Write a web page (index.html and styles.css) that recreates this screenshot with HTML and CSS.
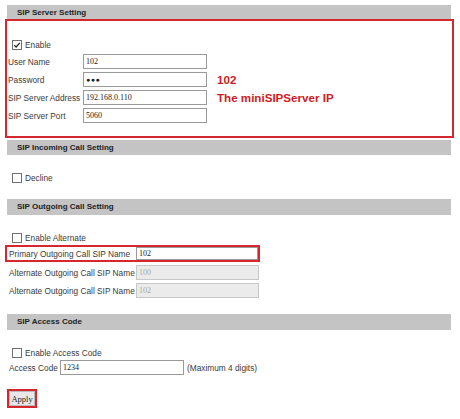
FILE: index.html
```html
<!DOCTYPE html>
<html lang="en">
<head>
    <meta charset="UTF-8">
    <title>SIP Settings</title>
    <link rel="stylesheet" href="styles.css">
</head>
<body>
    <div class="page">
        <div class="section-title first">SIP Server Setting</div>
        <div class="server-box">
            <label class="check-row">
                <span class="box">
                    <svg width="8" height="8" viewBox="0 0 8 8"><path d="M1.2 4.1 L3.1 6 L6.8 1.8" fill="none" stroke="#222" stroke-width="1.2"/></svg>
                </span>
                Enable
            </label>
            <div class="server-grid">
                <span class="lbl">User Name</span>
                <input class="field" type="text" value="102">
                <span></span>

                <span class="lbl">Password</span>
                <input class="field pass" type="text" value="&#9679;&#9679;&#9679;">
                <span class="note">102</span>

                <span class="lbl">SIP Server Address</span>
                <input class="field" type="text" value="192.168.0.110">
                <span class="note">The miniSIPServer IP</span>

                <span class="lbl">SIP Server Port</span>
                <input class="field" type="text" value="5060">
                <span></span>
            </div>
        </div>

        <div class="section-title incoming">SIP Incoming Call Setting</div>
        <label class="check-row spaced"><span class="box"></span>Decline</label>

        <div class="section-title outgoing">SIP Outgoing Call Setting</div>
        <label class="check-row spaced"><span class="box"></span>Enable Alternate</label>
        <div class="name-row primary">
            <span class="lbl">Primary Outgoing Call SIP Name</span>
            <input class="field" type="text" value="102">
        </div>
        <div class="name-row">
            <span class="lbl">Alternate Outgoing Call SIP Name</span>
            <input class="field off" type="text" value="100" disabled>
        </div>
        <div class="name-row">
            <span class="lbl">Alternate Outgoing Call SIP Name</span>
            <input class="field off" type="text" value="102" disabled>
        </div>

        <div class="section-title access">SIP Access Code</div>
        <label class="check-row spaced"><span class="box"></span>Enable Access Code</label>
        <div class="code-row">
            <span class="lbl">Access Code</span>
            <input class="field" type="text" value="1234">
            <span class="hint">(Maximum 4 digits)</span>
        </div>

        <div class="apply-wrap">
            <button class="apply">Apply</button>
        </div>
    </div>
</body>
</html>
```

FILE: styles.css
```css
body {
    margin: 0;
    background: #fff;
    font-family: "Liberation Sans", Arial, sans-serif;
    font-size: 8.3px;
    color: #3a3a3a;
}

.page {
    padding-top: 5px;
    width: 460px;
}

.section-title {
    margin-left: 7px;
    width: 444px;
    height: 16px;
    line-height: 16px;
    padding-left: 10px;
    box-sizing: border-box;
    background: #c4c4c4;
    font-size: 8px;
    font-weight: bold;
    color: #222;
}

.section-title.first {
    height: 14px;
    line-height: 15px;
}

.section-title.incoming {
    margin-top: 2px;
    height: 15px;
}

.section-title.outgoing {
    margin-top: 16px;
}

.section-title.access {
    margin-top: 16px;
}

.server-box {
    margin-left: 5px;
    width: 449px;
    height: 119px;
    box-sizing: border-box;
    border: 2px solid #d6262e;
    padding: 19px 0 0 1px;
}

.check-row {
    display: flex;
    align-items: center;
    height: 10px;
    padding-left: 12px;
    gap: 3px;
    color: #3a3a3a;
}

.server-box .check-row {
    padding-left: 4px;
}

.check-row.spaced {
    margin-top: 18px;
}

.box {
    width: 10px;
    height: 10px;
    box-sizing: border-box;
    border: 1px solid #707070;
    background: #fff;
    display: flex;
    align-items: center;
    justify-content: center;
}

.box svg {
    display: block;
}

.server-grid {
    margin-top: 4px;
    display: grid;
    grid-template-columns: 75px 124px auto;
    grid-auto-rows: 15px;
    row-gap: 3px;
    align-items: center;
}

.server-grid .note {
    padding-left: 10px;
    color: #cc1c24;
    font-size: 11.6px;
    font-weight: bold;
}

.field {
    height: 15px;
    box-sizing: border-box;
    border: 1px solid #9a9a9a;
    padding: 0 2px;
    margin: 0;
    font-family: "Liberation Serif", "Times New Roman", serif;
    font-size: 8px;
    color: #222;
    background: #fff;
    outline: none;
}

.field.pass {
    font-family: "Liberation Sans", Arial, sans-serif;
    font-size: 7px;
    letter-spacing: 0.5px;
}

.field.off {
    background: #ebebeb;
    border-color: #c8c8c8;
    color: #a8a8a8;
}

.name-row {
    display: grid;
    grid-template-columns: 127px 123px;
    align-items: center;
    height: 15px;
    margin-top: 3px;
    padding-left: 9px;
}

.name-row .field {
    width: 123px;
}

.name-row.primary {
    margin-top: 2px;
    margin-left: 5px;
    padding-left: 2px;
    width: 255px;
    height: 17px;
    box-sizing: border-box;
    border: 2px solid #d6262e;
    grid-template-columns: 127px 122px;
}

.name-row.primary .field {
    width: 122px;
    height: 13px;
}

.code-row {
    display: flex;
    align-items: center;
    height: 15px;
    margin-top: 2px;
    padding-left: 9px;
}

.code-row .lbl {
    width: 51px;
}

.code-row .field {
    width: 124px;
}

.code-row .hint {
    padding-left: 3px;
}

.apply-wrap {
    margin: 14px 0 0 7px;
    width: 30px;
    height: 19px;
    box-sizing: border-box;
    border: 2px solid #d6262e;
}

.apply {
    display: block;
    width: 26px;
    height: 15px;
    margin: 0;
    padding: 0;
    border: 1px solid #bbb;
    background: #e8e8e8;
    font-family: "Liberation Serif", "Times New Roman", serif;
    font-size: 8.5px;
    color: #222;
}
```
